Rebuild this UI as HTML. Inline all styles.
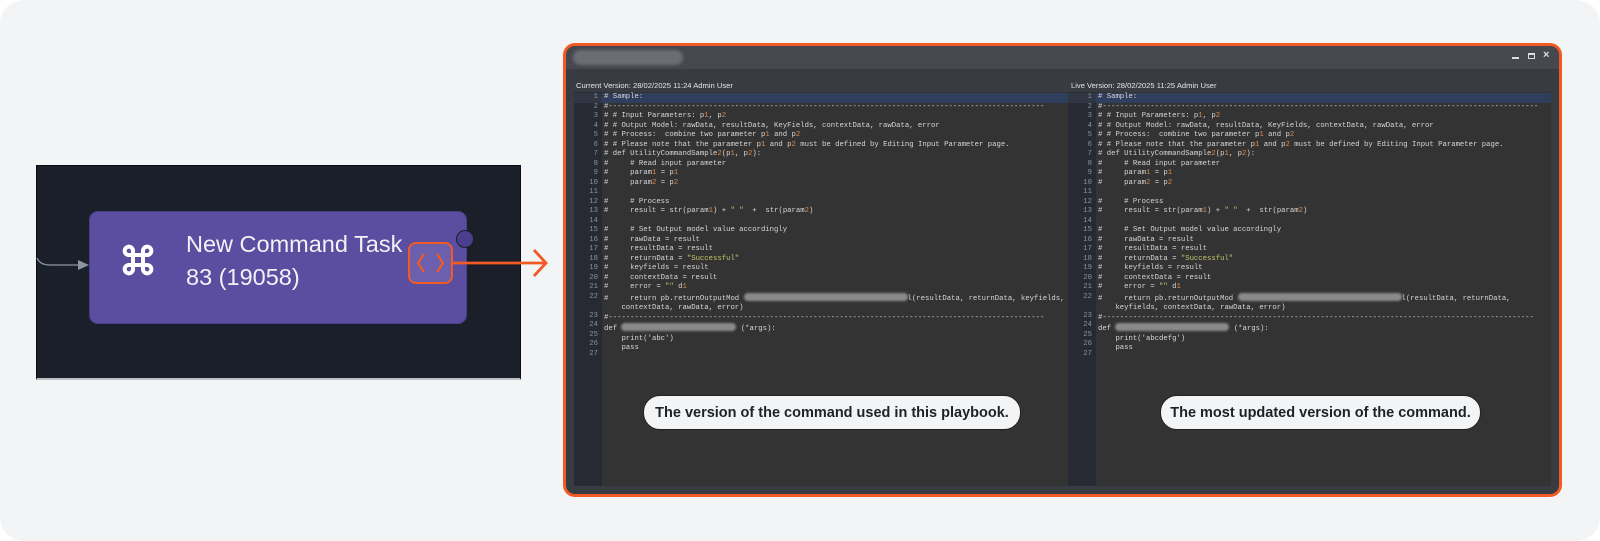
<!DOCTYPE html>
<html><head><meta charset="utf-8"><style>
*{margin:0;padding:0;box-sizing:border-box}
html,body{width:1600px;height:541px;background:#fff;overflow:hidden;font-family:"Liberation Sans",sans-serif}
.card{position:absolute;left:0;top:0;width:1600px;height:541px;background:#f3f4f6;border-radius:24px}
.panel{position:absolute;left:36px;top:165px;width:485px;height:215px;background:#1b1f29;border:1px solid #0b0d12;border-bottom:2px solid #bfc1c6}
.node{position:absolute;left:89px;top:211px;width:378px;height:113px;background:#5b4da0;border-radius:9px;border:1px solid #4b3f8a}
.ntext{position:absolute;left:186px;top:228px;color:#f2f2f6;font-size:23.5px;line-height:33px}
.modal{position:absolute;left:563px;top:43px;width:999px;height:454px;border:3px solid #f15a22;border-radius:12px;background:#393b42;overflow:hidden}
.title{position:absolute;left:0;top:0;right:0;height:23px;background:#46474f}
.pill{position:absolute;left:7px;top:4px;width:110px;height:15px;border-radius:8px;background:#6c6d74;filter:blur(1.5px)}
.lbl{position:absolute;top:35px;font-size:7.6px;color:#e6e6e6}
.gut{position:absolute;top:46px;height:394px;background:#272a32}
.code{position:absolute;top:46px;height:394px;background:#333333}
pre{position:absolute;top:47px;font-family:"Liberation Mono",monospace;font-size:7.28px;line-height:9.5px;color:#d6d6d6}
.num{color:#8d929b;text-align:right}
.hl{position:absolute;top:47px;height:10px;background:#2f3e5c}
.o{color:#e08a45}.g{color:#c0c46a}
.bl{display:inline-block;height:8px;border-radius:4px;background:#8a8a8a;filter:blur(1px);vertical-align:-1px}
.bub{position:absolute;top:395px;height:35px;background:#f3f4f6;border-radius:17px;font-weight:bold;font-size:14.5px;color:#1f2124;line-height:35px;text-align:center;border:1px solid #222}
</style></head><body>
<div class="card"></div>
<div class="panel"></div>
<svg style="position:absolute;left:0;top:0" width="600" height="541">
<path d="M37 258 Q40 265 50 265 L85 265" stroke="#8b96a3" stroke-width="1.3" fill="none"/>
<path d="M78 260 L89 265 L78 270 Z" fill="#8b96a3"/>
</svg>
<div class="node"></div>
<svg style="position:absolute;left:118px;top:240px" width="40" height="40" viewBox="0 0 24 24"><path d="M9 6v12M15 6v12M6 9h12M6 15h12M9 9H6.5A2.5 2.5 0 1 1 9 6.5M15 9h2.5A2.5 2.5 0 1 0 15 6.5M9 15H6.5A2.5 2.5 0 1 0 9 17.5M15 15h2.5a2.5 2.5 0 1 1-2.5 2.5" stroke="#fff" stroke-width="2.4" fill="none"/><rect x="10.2" y="10.2" width="3.6" height="3.6" fill="#5b4da0"/></svg>
<div class="ntext">New Command Task<br>83 (19058)</div>
<div style="position:absolute;left:456px;top:230px;width:18px;height:18px;border-radius:50%;background:#4a3f8e;border:1px solid #1b1f29"></div>
<div style="position:absolute;left:408px;top:242px;width:45px;height:42px;border:2.5px solid #f15a22;border-radius:8px;background:#6b5fae"></div>
<svg style="position:absolute;left:0;top:0" width="600" height="541">
<path d="M424 254 L418 263 L424 272 M437 254 L443 263 L437 272" stroke="#f15a22" stroke-width="2.2" fill="none"/>
<path d="M453 263 L546 263 M534 250 L546 263 L534 276" stroke="#f15a22" stroke-width="2.8" fill="none"/>
</svg>
<div class="modal">
<div class="title"><div class="pill"></div>
<div style="position:absolute;left:946px;top:11px;width:7px;height:1.5px;background:#ddd"></div>
<div style="position:absolute;left:962px;top:7px;width:7px;height:6px;border:1.5px solid #ddd;border-top-width:2.5px"></div>
<div style="position:absolute;left:977px;top:3px;color:#ddd;font-size:11px;font-weight:bold">×</div>
</div>
<div class="lbl" style="left:10px">Current Version: 28/02/2025 11:24 Admin User</div>
<div class="lbl" style="left:505px">Live Version: 28/02/2025 11:25 Admin User</div>
<div class="gut" style="left:8px;width:28px"></div>
<div class="code" style="left:36px;width:466px"></div>
<div class="gut" style="left:502px;width:28px"></div>
<div class="code" style="left:530px;width:455px"></div>
<div class="hl" style="left:36px;width:466px"></div>
<div class="hl" style="left:8px;width:28px;background:#303644"></div>
<div class="hl" style="left:530px;width:455px"></div>
<div class="hl" style="left:502px;width:28px;background:#303644"></div>
<pre class="num" style="left:8px;width:24px">1
2
3
4
5
6
7
8
9
10
11
12
13
14
15
16
17
18
19
20
21
22

23
24
25
26
27</pre>
<pre class="num" style="left:502px;width:24px">1
2
3
4
5
6
7
8
9
10
11
12
13
14
15
16
17
18
19
20
21
22

23
24
25
26
27</pre>
<pre style="left:38px"># Sample:
#----------------------------------------------------------------------------------------------------
# # Input Parameters: p<span class="o">1</span>, p<span class="o">2</span>
# # Output Model: rawData, resultData, KeyFields, contextData, rawData, error
# # Process:  combine two parameter p<span class="o">1</span> and p<span class="o">2</span>
# # Please note that the parameter p<span class="o">1</span> and p<span class="o">2</span> must be defined by Editing Input Parameter page.
# def UtilityCommandSample<span class="o">2</span>(p<span class="o">1</span>, p<span class="o">2</span>):
#     # Read input parameter
#     param<span class="o">1</span> = p<span class="o">1</span>
#     param<span class="o">2</span> = p<span class="o">2</span>

#     # Process
#     result = str(param<span class="o">1</span>) + <span class="g">" "</span>  +  str(param<span class="o">2</span>)

#     # Set Output model value accordingly
#     rawData = result
#     resultData = result
#     returnData = <span class="g">"Successful"</span>
#     keyfields = result
#     contextData = result
#     error = <span class="g">""</span> d<span class="o">1</span>
#     return pb.returnOutputMod <span class="bl" style="width:164px"></span>l(resultData, returnData, keyfields,
    contextData, rawData, error)
#----------------------------------------------------------------------------------------------------
def <span class="bl" style="width:115px"></span> (*args):
    print('abc')
    pass
</pre>
<pre style="left:532px"># Sample:
#----------------------------------------------------------------------------------------------------
# # Input Parameters: p<span class="o">1</span>, p<span class="o">2</span>
# # Output Model: rawData, resultData, KeyFields, contextData, rawData, error
# # Process:  combine two parameter p<span class="o">1</span> and p<span class="o">2</span>
# # Please note that the parameter p<span class="o">1</span> and p<span class="o">2</span> must be defined by Editing Input Parameter page.
# def UtilityCommandSample<span class="o">2</span>(p<span class="o">1</span>, p<span class="o">2</span>):
#     # Read input parameter
#     param<span class="o">1</span> = p<span class="o">1</span>
#     param<span class="o">2</span> = p<span class="o">2</span>

#     # Process
#     result = str(param<span class="o">1</span>) + <span class="g">" "</span>  +  str(param<span class="o">2</span>)

#     # Set Output model value accordingly
#     rawData = result
#     resultData = result
#     returnData = <span class="g">"Successful"</span>
#     keyfields = result
#     contextData = result
#     error = <span class="g">""</span> d<span class="o">1</span>
#     return pb.returnOutputMod <span class="bl" style="width:164px"></span>l(resultData, returnData,
    keyfields, contextData, rawData, error)
#---------------------------------------------------------------------------------------------------
def <span class="bl" style="width:114px"></span> (*args):
    print('abcdefg')
    pass
</pre>
</div>
<div class="bub" style="left:643px;width:378px">The version of the command used in this playbook.</div>
<div class="bub" style="left:1160px;width:321px">The most updated version of the command.</div>
</body></html>
